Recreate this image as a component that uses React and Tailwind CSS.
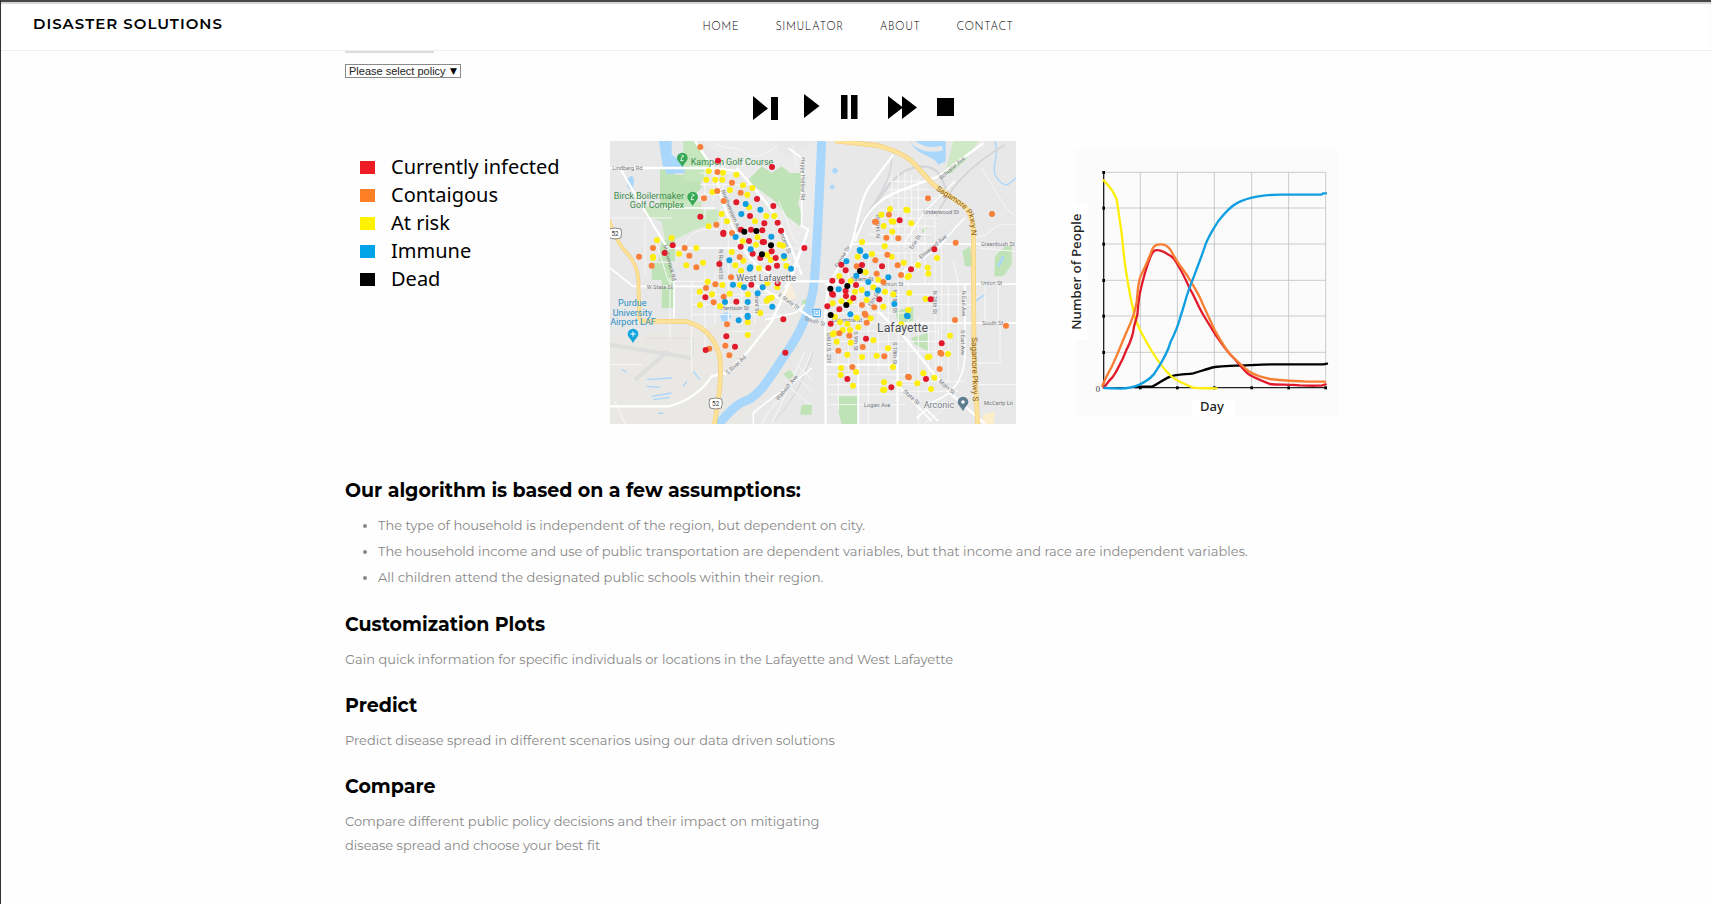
import React from "react";

const RED = "#e11b2c";
const ORANGE = "#f9803a";
const YELLOW = "#fdee0c";
const BLUE = "#0f9fe0";
const BLACK = "#000000";

/* Each group: [offsetX, offsetY, colour, "x,y x,y ..."] */
const DOTS = [
  [0, 0, YELLOW, "311,100 354,104 394,110 304,125 331,125 352,125 375,156 322,162 414,142 442,150 427,170 432,208 350,228 450,250 484,234 508,234 366,250 311,265 413,310 458,298 524,320 534,323 538,360 200,300 156,307 144,356 144,360 274,330 222,347 244,382 294,374 415,368 391,382 453,320 487,351 544,384 380,342 497,366 408,398 462,391 308,431"],
  [0, 0, ORANGE, "286,27 337,102 381,134 337,159 407,164 297,181 356,189 334,260 381,285 144,330 239,330 102,356 253,353 140,383 274,388 404,357 378,418"],
  [0, 0, RED, "339,68 501,87 456,183 394,193 505,204 286,236 435,234 518,254 478,256 355,284 355,288 408,275 438,275 472,277 528,278 432,309 473,312 477,312 407,326 203,322 179,345 443,347 466,360 500,340 512,360 598,330 516,383 490,390 343,378"],
  [0, 0, BLUE, "422,198 466,215 409,228 392,297 499,296 437,334 537,354 373,367 434,392 436,388 558,392"],
  [0, 0, BLACK, "418,281 454,279 498,322 471,349"],
  [0, 426, YELLOW, "352,15 284,35 321,43 374,41 429,43 285,75 345,79 500,53 485,62 491,56 466,99 428,127 428,165 517,22 405,15 487,10"],
  [0, 426, ORANGE, "331,13 303,24 356,50 326,67 366,133 361,197 313,206 373,226"],
  [0, 426, RED, "439,14 518,10 301,52 394,65 364,169 302,210 390,200 535,118 541,218"],
  [0, 426, BLUE, "384,14 417,22 473,22 458,40 360,66 428,66 502,80 428,107 428,111 401,121"],
  [615, 0, YELLOW, "240,213 289,215 292,217 214,230 304,256 245,250 250,251 221,264 247,281 224,325 156,312 186,348 143,356 245,356 281,374 324,381 353,389 355,407 381,360 293,417 297,414 167,403 88,415 122,429 205,425"],
  [615, 0, ORANGE, "354,181 546,228 437,314 237,230 195,251 198,252 229,299 265,301 232,350 263,382 196,367 200,407 273,411 140,385 220,432"],
  [615, 0, RED, "269,247 373,334 94,380 107,397 156,381 216,385 303,394 67,428 95,430"],
  [615, 0, BLUE, "149,336 151,339 167,355 109,370 139,413 235,418 175,432"],
  [615, 0, BLACK, "150,399"],
  [615, 426, YELLOW, "135,35 155,30 190,22 225,35 250,43 298,39 347,57 68,70 94,64 120,65 170,60 295,90 220,80 274,133 90,127 112,132 140,113 145,142 182,115 120,150 98,150 68,163 72,160 80,185 122,188 190,181 234,205 200,227 112,224 156,231 249,261 93,264 92,285 138,276 129,317 222,307 223,329 219,330 268,311 322,310 340,280 373,293 363,327 353,231 358,230 414,222 420,167 75,110"],
  [615, 426, ORANGE, "435,120 588,137 164,101 167,105 156,75 193,82 170,128 88,160 118,167 85,212 158,201 223,229 127,261 391,218 394,221 389,267 294,290 297,292"],
  [615, 426, RED, "66,41 69,44 108,48 138,15 130,54 52,79 88,88 208,58 362,58 62,131 168,176 395,190 112,297 348,297 244,322 107,33"],
  [615, 426, BLUE, "86,28 172,41 204,31 253,72 291,107 293,109 121,103"],
  [615, 426, BLACK, "61,26 112,18 109,75 62,105"],
];

const MINOR_ROADS = [
  "M285,105H410M285,140H440M300,85V190M325,85V190M355,85V190M285,170H370",
  "M195,600V420M195,430H560M260,430V700M300,400V640M330,400V560M370,250V560M410,430V560M450,330V560M260,500H530M260,530H530M260,470H540M330,370H560M370,330H600M365,580H450M190,430L150,300",
  "M240,330C245,280 290,270 340,275M350,210V300M300,210V245M500,210L545,330M520,190C560,260 550,300 590,330M17,240H200M120,250V410",
  "M860,110V320M880,105V330M900,100V330M920,110V400M940,120V400M850,130H960M850,155H975M850,180H1000M820,215H1040M800,240H1000M800,265H990M790,290H980M780,315H960M770,345H950M900,340V440M960,240V440M990,220V700M1010,300V700",
  "M660,440H1230M665,470H1100M665,500H1100M660,525H900M660,555H1230M670,580H1000M670,610H1040M670,640H1040M660,710H900M670,740H930M670,770H930M670,800H900M700,400V820M730,400V700M760,380V858M790,360V858M820,380V700M850,340V700M880,340V858M910,430V720M940,540V858M970,560V760M1000,560V740M1030,440V730M1060,440V700M860,730H1080M880,760H1060",
  "M1105,300C1180,290 1150,250 1230,260M1130,90C1180,170 1200,220 1230,230M1120,330L1230,340M1140,555V430M1180,430V555M1185,555V675H1118M1120,740H1233M1030,790C1010,830 970,840 960,858M1045,370L1060,435",
  "M17,680H110M30,790L60,858M470,858C520,760 590,740 620,640M560,700L620,760M575,680L625,730M545,740L615,800M600,640L500,860M370,560V420",
  "M330,15C360,40 400,20 420,45C440,70 500,40 520,20M560,20C580,60 560,90 600,100",
];

const MAP_TEXT = [
  [22, 95, "Lindberg Rd"],
  [125, 452, "W State St"],
  [347, 516, "Harrison St"],
  [955, 229, "Underwood St"],
  [1128, 324, "Greenbush St"],
  [1128, 441, "Union St"],
  [1131, 562, "South St"],
  [1137, 801, "McCarty Ln"],
  [777, 806, "Logan Ave"],
  [832, 445, "Union St"],
  [738, 428, "Salem St"],
  [680, 551, "Columbia St"],
];

const ROTATED_TEXT = [
  [587, 58, 90, "Happy Hollow Rd"],
  [348, 158, 68, "Northwestern Ave"],
  [520, 276, 68, "Vincent St"],
  [174, 322, 75, "McCormick Rd"],
  [343, 334, 90, "N Russell St"],
  [518, 474, 35, "E State St"],
  [368, 710, -42, "S River Rd"],
  [520, 788, -50, "Wabash Ave"],
  [1008, 125, -40, "Schuyler Ave"],
  [922, 335, -57, "Erie St"],
  [948, 364, -40, "Elmwood Ave"],
  [698, 390, -58, "Farrow Dr"],
  [824, 300, -90, "N 14th St"],
  [983, 458, 90, "N 26th St"],
  [1070, 458, 90, "N Earl Ave"],
  [1068, 576, 90, "S Earl Ave"],
  [863, 612, 90, "S 18th St"],
  [863, 455, 90, "N 18th St"],
  [746, 580, 90, "S 9th St"],
  [666, 584, 90, "Old U.S. 231"],
  [1000, 732, 42, "Main St"],
  [893, 762, 42, "State St"],
  [798, 506, -58, "Elm St"],
  [451, 465, 90, "Grant St"],
  [598, 545, 18, "South St"],
];

function MapPin({ x, y, color, children }) {
  return (
    <g transform={`translate(${x} ${y})`}>
      <path d="M0,22C-4,10 -16,4 -16,-6A16,16 0 0 1 16,-6C16,4 4,10 0,22Z" fill={color} />
      {children}
    </g>
  );
}

function CityMap() {
  return (
    <svg viewBox="15 9 1218 849" className="block h-auto w-[406px] flex-none font-[Roboto,sans-serif]" role="img" aria-label="Simulated spread across Lafayette and West Lafayette">
      <rect x="15" y="9" width="1218" height="850" fill="#e8e8e8" />
      <path d="M15,600L330,560L620,520L560,700L400,858H15Z" fill="#e9e8e5" />
      <path d="M290,9H500L540,60L640,9V330L560,310L480,190L420,110Z" fill="#ebebeb" />
      {/* parks */}
      <g fill="#bfe3b6">
        <path d="M165,90H205L210,110H285L290,150L250,190L190,200L165,205Z" />
        <path d="M235,9H275L320,90L290,130H235Z" fill="#c6e6be" />
        <path d="M190,190H290V215H340V250L270,275L220,300L180,310L170,250L120,235V205L170,210Z" fill="#cbe6c3" />
        <path d="M140,375H200V426H140ZM170,426H205V510H170ZM170,310L210,300V370H160Z" />
        <path d="M425,130L470,85L500,105L530,85L555,105L590,105V150L580,195L592,240L585,265L545,235L510,190L470,160Z" />
        <path d="M1045,9H1120L1080,70L1035,108H1020Z" fill="#cfe8c6" />
        <path d="M1170,355L1200,325H1220V380L1195,415H1168Z" />
        <path d="M1072,340L1095,325L1105,385H1080Z" />
        <path d="M870,520L925,505V550L880,555Z" />
        <path d="M918,600L970,585V640L930,620Z" />
        <path d="M700,775H757V858H710L700,820Z" />
        <path d="M590,490L612,478V520L598,525ZM535,708L555,695L568,712L552,725ZM590,800H620V830H585Z" />
        <path d="M950,275L970,265L955,285Z" />
      </g>
      <path d="M1135,830L1170,820L1165,858H1130Z" fill="#fdeecb" />
      <path d="M525,465L560,440L575,480L545,490Z" fill="#f8eedb" />
      {/* water */}
      <g fill="#a9d6fb">
        <path d="M162,9H200V50L235,75L240,105L185,108L172,80Z" />
        <path d="M66,125C80,105 90,115 86,140C84,155 72,160 68,145Z" />
        <path d="M915,9H1022V70L1000,80C985,50 935,55 915,9Z" />
        <circle cx="690" cy="98" r="8" />
        <circle cx="682" cy="147" r="7" />
        <path d="M345,530L370,520L380,535L365,550H350Z" />
      </g>
      <path d="M920,9Q960,45 1012,30" stroke="#e8e8e8" strokeWidth="14" fill="none" />
      <path d="M650,9C644,150 638,300 628,430C620,510 585,590 540,650C500,710 470,765 430,785C385,800 370,830 335,862" fill="none" stroke="#a9d6fb" strokeWidth="27" />
      <g fill="none" stroke="#a9d6fb" strokeWidth="4">
        <path d="M1170,9C1185,50 1160,80 1170,110C1180,130 1200,150 1215,135L1233,120" />
        <path d="M125,725L200,720M125,745L165,748M140,775L200,765M145,785L195,778M235,745L245,730M265,700L285,725M50,695L65,702M1110,490L1140,470M160,826H175" />
        <path d="M1195,355L1180,385" strokeWidth="8" />
      </g>
      {/* airport runways */}
      <g fill="none" stroke="#dedede">
        <path d="M15,620L260,660" strokeWidth="12" />
        <path d="M90,725L190,640" strokeWidth="12" />
        <path d="M120,600H265V655" strokeWidth="3" />
      </g>
      {/* railways */}
      <g fill="none" stroke="#d3d5d8" strokeWidth="7">
        <path d="M755,280C830,180 860,90 950,85C1010,85 1010,130 1030,170" />
        <path d="M750,285C800,200 860,140 860,60" strokeWidth="4" />
        <path d="M990,240C1030,160 1080,90 1200,20" strokeWidth="5" />
        <path d="M500,858C590,760 600,700 625,640" strokeWidth="3" />
      </g>
      {/* roads */}
      <g fill="none" stroke="#f8f8f8" strokeWidth="3">
        {MINOR_ROADS.map((d) => (
          <path key={d} d={d} />
        ))}
      </g>
      <g fill="none" stroke="#ffffff" strokeWidth="7">
        <path d="M15,90H330L400,100M45,90C90,170 150,270 190,335" />
        <path d="M270,9L330,100C345,160 350,200 390,280C410,340 450,390 520,420" />
        <path d="M395,90L430,130L480,190C520,240 560,330 590,410" />
        <path d="M550,30L590,60V265L610,275L560,400L540,450" strokeWidth="5" />
        <path d="M190,330H400M207,430V540M15,390L85,445H300M175,210H330" strokeWidth="5" />
        <path d="M15,805H190C250,790 290,760 320,715L360,705" />
        <path d="M360,710L430,640L500,550L555,430L610,275" />
        <path d="M445,858V825C520,760 590,720 620,690" strokeWidth="5" />
        <path d="M430,430L560,500L650,560M555,430H700" />
        <path d="M480,545L570,525L600,500" strokeWidth="5" />
        <path d="M865,50L790,150C755,210 755,290 735,330L670,440L660,530L662,858" />
        <path d="M1135,15L1000,115L880,160C800,190 770,250 750,310" />
        <path d="M900,310L960,220L1050,130" strokeWidth="4" />
        <path d="M880,410L1000,330L1050,270L1080,240" strokeWidth="4" />
        <path d="M735,318H1233M660,438H1233M850,555H1233M662,680H877" strokeWidth="5" />
        <path d="M820,520L900,600L980,700L1040,770L1140,858" />
        <path d="M877,740L980,850M760,680V858M877,640V858" strokeWidth="5" />
        <path d="M1080,440V640C1080,740 1030,780 960,800M935,840L965,815L1000,850" strokeWidth="5" />
      </g>
      {/* highways */}
      <g fill="none" strokeLinejoin="round">
        <g stroke="#f5cf75" strokeWidth="14">
          <path d="M690,9L815,22Q900,45 930,80L985,140L1080,205Q1105,235 1105,280L1107,640L1118,860" />
          <path d="M10,240Q30,310 70,350Q95,380 100,420L103,545" strokeWidth="11" />
          <path d="M103,549L245,551Q320,570 343,650Q352,700 338,800L328,860" />
        </g>
        <g stroke="#fde29a" strokeWidth="10">
          <path d="M690,9L815,22Q900,45 930,80L985,140L1080,205Q1105,235 1105,280L1107,640L1118,860" />
          <path d="M10,240Q30,310 70,350Q95,380 100,420L103,545" strokeWidth="7" />
          <path d="M103,549L245,551Q320,570 343,650Q352,700 338,800L328,860" />
        </g>
      </g>
      {/* street names */}
      <g fontSize="17" fill="#73777c">
        {MAP_TEXT.map(([x, y, label]) => (
          <text key={`${x}-${y}`} x={x} y={y}>
            {label}
          </text>
        ))}
        {ROTATED_TEXT.map(([x, y, angle, label]) => (
          <text key={`${x}-${y}`} transform={`translate(${x} ${y}) rotate(${angle})`}>
            {label}
          </text>
        ))}
      </g>
      <path id="sagamore-north" d="M992,156C1040,188 1080,205 1094,240Q1100,265 1099,310" fill="none" />
      <text fontSize="23" fill="#8a5a16">
        <textPath href="#sagamore-north">Sagamore Pkwy N</textPath>
      </text>
      <text transform="translate(1100 598) rotate(89)" fontSize="24" fill="#8a5a16">Sagamore Pkwy S</text>
      {/* route shields */}
      {[[30, 287], [332, 797]].map(([x, y]) => (
        <g key={x}>
          <path d={`M${x - 18},${y - 14}Q${x},${y - 20} ${x + 18},${y - 14}Q${x + 22},${y} ${x + 17},${y + 13}Q${x},${y + 19} ${x - 17},${y + 13}Q${x - 22},${y} ${x - 18},${y - 14}Z`} fill="#fff" stroke="#555" strokeWidth="2" />
          <text x={x} y={y + 7} fontSize="19" textAnchor="middle" fill="#333">52</text>
        </g>
      ))}
      {/* places */}
      <g fill="#3b8d4d" fontSize="27">
        <text x="257" y="80">Kampen Golf Course</text>
        <text x="237" y="183" textAnchor="end">Birck Boilermaker</text>
        <text x="237" y="210" textAnchor="end">Golf Complex</text>
      </g>
      {[[232, 66], [263, 183]].map(([x, y]) => (
        <MapPin key={x} x={x} y={y} color="#34a853">
          <path d="M-3,-15L5,-11L-3,-7V2M-6,2H4" fill="none" stroke="#fff" strokeWidth="2.5" />
        </MapPin>
      ))}
      <g fill="#2a8fc4" fontSize="27" textAnchor="middle">
        <text x="82" y="505">Purdue</text>
        <text x="82" y="533">University</text>
        <text x="84" y="560">Airport LAF</text>
      </g>
      <MapPin x={84} y={594} color="#12a5dd">
        <path d="M-8,-6H8M0,-14V2" stroke="#fff" strokeWidth="3" />
      </MapPin>
      <g>
        <rect x="624" y="514" width="22" height="22" rx="2" fill="#fff" stroke="#2196f3" strokeWidth="3" />
        <path d="M630,519h10v9h-10zM631,532l3,-3M639,532l-3,-3" fill="none" stroke="#2196f3" strokeWidth="2" />
      </g>
      {/* people */}
      {DOTS.map(([dx, dy, color, points]) => (
        <g key={`${dx}-${dy}-${color}`} fill={color}>
          {points.split(" ").map((p) => {
            const [x, y] = p.split(",").map(Number);
            return <circle key={p} cx={x + dx} cy={y + dy} r="9" />;
          })}
        </g>
      ))}
      <g stroke="#f4f4f4" strokeWidth="4" paintOrder="stroke" fill="#5f6368">
        <text x="394" y="429" fontSize="27">West Lafayette</text>
        <text x="816" y="582" fontSize="37" fill="#4d5156">Lafayette</text>
        <text x="956" y="810" fontSize="27" fill="#7a7f85">Arconic</text>
      </g>
      <MapPin x={1074} y={798} color="#5c7c92">
        <circle cy="-6" r="5.5" fill="#fff" />
      </MapPin>
    </svg>
  );
}

function SpreadChart() {
  const xs = [241, 352, 463, 575, 686, 797];
  const ys = [97, 204, 312, 421, 528, 637];
  return (
    <svg viewBox="0 3 870 867" className="block h-auto w-[290px] flex-none font-['Noto_Sans',sans-serif]" role="img" aria-label="Number of people per day by status">
      <rect x="46" y="28" width="790" height="800" fill="#fbfbfb" />
      <path d="M30,190H84V600H30ZM396,780H524V828H396Z" fill="#fff" />
      <g stroke="#bfc0c3" strokeWidth="2.5">
        {xs.map((x) => (
          <path key={x} d={`M${x},97V743`} />
        ))}
        {ys.map((y) => (
          <path key={y} d={`M131,${y}H797`} />
        ))}
      </g>
      <path d="M131,95V743H800" fill="none" stroke="#222" strokeWidth="4" />
      <g fill="#000">
        {ys.map((y) => (
          <rect key={y} x="127" y={y - 4} width="8" height="9" />
        ))}
        {xs.map((x) => (
          <rect key={x} x={x - 4} y="739" width="8" height="9" />
        ))}
      </g>
      <g fill="none" strokeWidth="7" strokeLinejoin="round" strokeLinecap="round">
        <path stroke="#000" d="M225,741L278,739C295,731 305,722 325,712C340,706 350,704 360,704C375,702 385,703 400,700C420,695 440,686 465,681C490,678 510,678 525,677C545,677 560,676 580,675C600,673 610,673 640,673H790L801,671" />
        <path stroke={YELLOW} d="M131,121C145,135 160,150 170,178C175,205 176,225 183,265C190,315 190,350 200,405C205,440 215,490 225,533C235,565 255,600 275,633C295,665 310,688 335,710C355,725 375,734 400,743C420,746 440,744 470,745" />
        <path stroke={RED} d="M131,743L147,723C160,712 163,705 170,692C185,665 190,655 200,628C215,600 220,580 222,560L232,525C235,495 235,475 243,445C250,415 255,395 265,368C272,345 277,335 285,331C300,328 310,334 322,342C340,350 345,360 355,378C370,402 380,425 390,447C405,472 415,500 430,525L465,582C485,610 495,627 515,648C535,667 545,685 565,702C585,715 605,722 630,732C650,736 680,732 720,736C750,738 765,737 785,737L797,733" />
        <path stroke="#f77f33" d="M127,738C135,715 145,700 155,680C170,650 185,610 200,575C215,545 225,520 230,485C233,460 233,430 242,408C255,380 262,368 272,340C278,320 285,313 300,313C315,313 322,316 333,332C345,355 355,372 370,390C385,410 390,420 400,437C410,455 420,470 427,490L465,572C485,608 495,625 510,642C530,662 545,677 565,693C585,706 605,712 630,717C660,722 690,722 740,725L795,725" />
        <path stroke={BLUE} d="M133,744L180,746C200,745 220,742 240,733C265,720 280,710 290,690C310,660 325,630 332,605C350,570 355,555 362,528C375,490 378,470 390,440C405,400 425,350 437,312C450,280 465,260 475,243C495,218 510,200 530,190C550,178 570,173 595,169C615,166 630,164 660,164H783L790,160L798,160" />
      </g>
      <text x="107" y="756" fontSize="26" fill="#333" fontFamily="Liberation Serif, serif">0</text>
      <text x="456" y="812" fontSize="39" fontWeight="500" textAnchor="middle" fill="#222">Day</text>
      <text transform="translate(63 395) rotate(-90)" fontSize="40" fontWeight="500" textAnchor="middle" fill="#222">Number of People</text>
    </svg>
  );
}

const CONTROLS = [
  ["Step", "M9,4V28L24,16.5ZM27,5H34V28H27Z"],
  ["Play", "M15,2V26L30.5,14Z"],
  ["Pause", "M7,3H13.5V27H7ZM17,3H23.5V27H17Z"],
  ["Fast forward", "M9,4V27L24,15.5ZM23,4V27L38,15.5Z"],
  ["Stop", "M13,6H30V24H13Z"],
];

const LEGEND = [
  ["bg-[#ed1c24]", "Currently infected"],
  ["bg-[#ff7f27]", "Contaigous"],
  ["bg-[#fff200]", "At risk"],
  ["bg-[#00a2e8]", "Immune"],
  ["bg-black", "Dead"],
];

const ASSUMPTIONS = [
  "The type of household is independent of the region, but dependent on city.",
  "The household income and use of public transportation are dependent variables, but that income and race are independent variables.",
  "All children attend the designated public schools within their region.",
];

const SECTIONS = [
  ["Customization Plots", ["Gain quick information for specific individuals or locations in the Lafayette and West Lafayette"]],
  ["Predict", ["Predict disease spread in different scenarios using our data driven solutions"]],
  ["Compare", ["Compare different public policy decisions and their impact on mitigating", "disease spread and choose your best fit"]],
];

export default function App() {
  return (
    <div className="min-h-screen border-l border-[#333] bg-[#fefefe] font-[Montserrat,Inter,sans-serif] text-black">
      <header className="grid h-[51px] grid-cols-[1fr_auto_1fr] items-center border-t-2 border-b border-t-[#484848] border-b-[#eeeeee] bg-white px-8 shadow-[inset_0_2px_1px_#d4d4d4]">
        <a href="#top" className="pb-1 text-[15px] leading-5 font-semibold tracking-[1px]">DISASTER SOLUTIONS</a>
        <nav className="flex gap-9 pt-[3px] pl-1 font-['Josefin_Sans',Lato,sans-serif] text-[11px] leading-4 font-light tracking-wider text-black">
          <a href="#home">HOME</a>
          <a href="#simulator">SIMULATOR</a>
          <a href="#about">ABOUT</a>
          <a href="#contact">CONTACT</a>
        </nav>
      </header>

      <main className="mx-auto max-w-[1022px]">
        <div className="h-[2px] w-[89px] bg-[#dcdcdc]" />
        <div className="relative mt-[11px] w-[116px] font-['Liberation_Sans',sans-serif]">
          <select aria-label="Policy" className="block h-[14px] w-full appearance-none border border-[#8a8a8a] bg-white pl-[3px] text-[11px] leading-3 text-[#222]">
            <option>Please select policy</option>
          </select>
          <span aria-hidden="true" className="pointer-events-none absolute top-0 right-1 font-['DejaVu_Sans',sans-serif] text-[9px] leading-[14px]">▼</span>
        </div>

        <div className="mt-[14px] flex justify-center">
          {CONTROLS.map(([label, d]) => (
            <button key={label} type="button" aria-label={label} className="block">
              <svg viewBox="0 0 45 30" className="block h-[30px] w-[45px]">
                <path d={d} />
              </svg>
            </button>
          ))}
        </div>

        <div className="mt-[19px] flex items-start">
          <ul className="w-[265px] flex-none pt-3 pl-[15px] font-['Noto_Sans',sans-serif] text-[20px] leading-7">
            {LEGEND.map(([color, label]) => (
              <li key={label} className="flex items-center gap-4">
                <span className={`h-[13px] w-[15px] ${color}`} />
                {label}
              </li>
            ))}
          </ul>
          <CityMap />
          <div className="ml-11">
            <SpreadChart />
          </div>
        </div>

        <section className="mt-[47px]">
          <h2 className="text-[19px] leading-7 font-bold">Our algorithm is based on a few assumptions:</h2>
          <ul className="mt-[7px] list-disc pl-[33px] text-[13px] leading-[26px] text-[#888]">
            {ASSUMPTIONS.map((text) => (
              <li key={text}>{text}</li>
            ))}
          </ul>
        </section>
        {SECTIONS.map(([title, lines]) => (
          <section key={title} className="mt-[21px]">
            <h2 className="text-[19px] leading-7 font-bold">{title}</h2>
            <p className="mt-2 text-[13px] leading-6 text-[#888]">
              {lines.map((line) => (
                <span key={line} className="block">{line}</span>
              ))}
            </p>
          </section>
        ))}
      </main>
    </div>
  );
}
